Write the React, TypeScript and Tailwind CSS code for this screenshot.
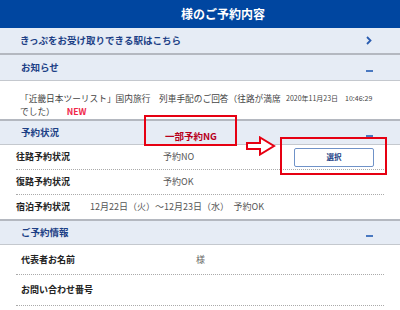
import React from "react";

const font = "font-['Noto_Sans_CJK_JP','Noto_Sans',sans-serif]";

function Minus() {
  return <span className="block w-[7px] h-[2px] bg-[#4a78c0] mt-[6px]" />;
}

function SectionHeader({ title, children, topBorder }: { title: string; children?: React.ReactNode; topBorder?: boolean }) {
  return (
    <div className={`h-[26px] bg-[#e6ecf5] flex items-center pl-[21px] pr-[27px] border-b border-[#c4c8ce] ${topBorder ? "border-t-2 border-t-[#b4b8c0]" : ""}`}>
      <span className="text-[9.5px] font-bold text-[#1c3f86] w-[144px]">{title}</span>
      <div className="flex-1">{children}</div>
      <Minus />
    </div>
  );
}

export default function App() {
  return (
    <div className={`relative w-[400px] h-[310px] overflow-hidden bg-white ${font}`}>
      <div className="h-[28px] bg-[#0046a0] flex items-center justify-center pl-[46px] text-white text-[12px] font-bold">
        様のご予約内容
      </div>
      <div className="h-[27px] bg-[#e6ecf5] border-b-2 border-[#b4b8c0] flex items-center justify-between pl-[20px] pr-[28px]">
        <span className="text-[9.5px] font-bold text-[#1c3f86]">きっぷをお受け取りできる駅はこちら</span>
        <svg width="6" height="9" viewBox="0 0 6 9">
          <polyline points="1,1 4.5,4.5 1,8" fill="none" stroke="#2a5cb0" strokeWidth="1.8" />
        </svg>
      </div>
      <SectionHeader title="お知らせ" />
      <div className="h-[38px] flex pl-[20px] pt-[12px]">
        <p className="w-[266px] text-[8.7px] leading-[12.5px] text-[#444]">
          「近畿日本ツーリスト」国内旅行　列車手配のご回答（往路が満席でした）
          <span className="ml-[12px] text-[#f0284a] font-bold">NEW</span>
        </p>
        <div className="flex gap-[7px] text-[7px] leading-[12.5px] text-[#444] mt-[-1px]">
          <span>2020年11月23日</span>
          <span>10:46:29</span>
        </div>
      </div>
      <SectionHeader title="予約状況" topBorder>
        <span className="text-[9.5px] font-bold text-[#b8001c]">一部予約NG</span>
      </SectionHeader>
      <div className="mx-[16px] text-[9px]">
        <div className="h-[25px] flex items-center border-b border-dotted border-[#aaa]">
          <span className="w-[147px] font-bold text-[#222]">往路予約状況</span>
          <span className="w-[131px] text-[#555]">予約NO</span>
          <button className="w-[80px] h-[19px] border border-[#6f92c8] rounded-[2px] bg-white text-[7.5px] font-bold text-[#1c3f86]">
            選択
          </button>
        </div>
        <div className="h-[25px] flex items-center border-b border-dotted border-[#aaa]">
          <span className="w-[147px] font-bold text-[#222]">復路予約状況</span>
          <span className="text-[#555]">予約OK</span>
        </div>
        <div className="h-[24px] flex items-center">
          <span className="w-[74px] font-bold text-[#222]">宿泊予約状況</span>
          <span className="text-[#555]">12月22日（火）～12月23日（水）　予約OK</span>
        </div>
      </div>
      <SectionHeader title="ご予約情報" topBorder />
      <div className="mx-[16px] text-[9px]">
        <div className="h-[30px] flex items-center pl-[5px] border-b border-dotted border-[#aaa]">
          <span className="w-[175px] font-bold text-[#222]">代表者お名前</span>
          <span className="text-[#666]">様</span>
        </div>
        <div className="h-[31px] flex items-center pl-[5px] border-b border-dotted border-[#aaa]">
          <span className="font-bold text-[#222]">お問い合わせ番号</span>
        </div>
      </div>

      <div className="absolute left-[144px] top-[115px] w-[93px] h-[31px] border-2 border-[#e60012]" />
      <div className="absolute left-[280px] top-[137px] w-[107px] h-[38px] border-2 border-[#e60012]" />
      <svg className="absolute left-[246px] top-[136px]" width="30" height="20" viewBox="0 0 30 20">
        <polygon points="1,7 14,7 14,1.5 28,10 14,18.5 14,13 1,13" fill="white" stroke="#e60012" strokeWidth="2" strokeLinejoin="miter" />
      </svg>
    </div>
  );
}
